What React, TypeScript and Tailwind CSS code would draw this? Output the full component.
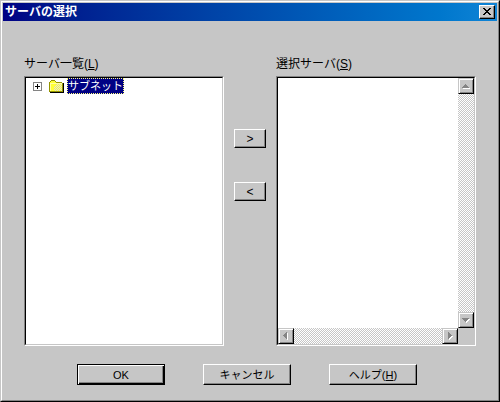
import React from 'react'

type Direction = 'up' | 'down' | 'left' | 'right'

const RAISED =
  'border border-t-white border-l-white border-r-black border-b-black bg-[#c6c6c6] shadow-[inset_-1px_-1px_0_#848484]'
const SUNKEN =
  'border border-t-[#848484] border-l-[#848484] border-r-white border-b-white bg-white'
const SUNKEN_INNER =
  'h-full border border-t-black border-l-black border-r-[#c6c6c6] border-b-[#c6c6c6]'
const TRACK =
  'bg-[repeating-conic-gradient(#c6c6c6_0%_25%,#ffffff_0%_50%)] bg-[length:2px_2px]'

const ARROWS: Record<Direction, string> = {
  up: 'M7 6h1v1h1v1h1v1h1v1H4V9h1V8h1V7h1z',
  down: 'M4 6h7v1h-1v1H9v1H8v1H7V9H6V8H5V7H4z',
  left: 'M8 4h1v7H8v-1H7V9H6V8H5V7h1V6h1V5h1z',
  right: 'M6 4h1v1h1v1h1v1h1v1H9v1H8v1H7v1H6z',
}

const SCROLL_LABELS: Record<Direction, string> = {
  up: '上へ',
  down: '下へ',
  left: '左へ',
  right: '右へ',
}

function ScrollButton({ direction }: { direction: Direction }) {
  return (
    <button
      type="button"
      disabled
      aria-label={SCROLL_LABELS[direction]}
      className="size-4 shrink-0 border border-t-[#c6c6c6] border-l-[#c6c6c6] border-r-black border-b-black bg-[#c6c6c6] shadow-[inset_1px_1px_0_#fff,inset_-1px_-1px_0_#848484]"
    >
      <svg viewBox="1 1 14 14" className="block size-full" shapeRendering="crispEdges">
        <path d={ARROWS[direction]} fill="#fff" transform="translate(1 1)" />
        <path d={ARROWS[direction]} fill="#848484" />
      </svg>
    </button>
  )
}

function FolderIcon() {
  return (
    <svg viewBox="0 0 15 13" className="h-[13px] w-[15px]" shapeRendering="crispEdges">
      <path d="M14 3h1v10H1v-1h13z" fill="#000" />
      <path d="M2 0h4v1h1v1h6v1h1v9H0V2h1V1h1z" fill="#949400" />
      <path d="M2 1h4v1h1v1h6v8H1V2h1z" fill="#ffff39" />
      <path d="M1 3h1v8H1zM2 3h11v1H2z" fill="#ffffa5" />
      {/* dithered highlight on the lower right */}
      <path
        d="M8 4h1v1H8zM10 4h1v1h-1zM12 4h1v1h-1zM7 5h1v1H7zM9 5h1v1H9zM11 5h1v1h-1zM6 6h1v1H6zM8 6h1v1H8zM10 6h1v1h-1zM12 6h1v1h-1zM5 7h1v1H5zM7 7h1v1H7zM9 7h1v1H9zM11 7h1v1h-1zM6 8h1v1H6zM8 8h1v1H8zM10 8h1v1h-1zM12 8h1v1h-1zM5 9h1v1H5zM7 9h1v1H7zM9 9h1v1H9zM11 9h1v1h-1zM6 10h1v1H6zM8 10h1v1H8zM10 10h1v1h-1zM12 10h1v1h-1z"
        fill="#dedede"
      />
    </svg>
  )
}

function DialogButton({ children }: { children: React.ReactNode }) {
  return (
    <button type="button" className={`h-[21px] w-[88px] text-[11px] leading-[18px] ${RAISED}`}>
      {children}
    </button>
  )
}

function MoveButton({ label, children }: { label: string; children: React.ReactNode }) {
  return (
    <button type="button" aria-label={label} className={`h-[19px] w-8 leading-4 ${RAISED}`}>
      {children}
    </button>
  )
}

export default function App() {
  return (
    <div
      role="dialog"
      aria-labelledby="title"
      className="border border-t-[#c6c6c6] border-l-[#c6c6c6] border-r-black border-b-black bg-[#c6c6c6] font-['Liberation_Sans','Noto_Sans_CJK_JP',sans-serif] text-xs text-black"
    >
      <div className="border border-t-white border-l-white border-r-[#848484] border-b-[#848484] p-px pb-[15px]">
        <header className="flex h-[18px] items-center justify-between bg-linear-to-r from-[#000084] to-[#1084d6] px-0.5">
          <h1 id="title" className="text-xs leading-[18px] font-bold text-white">
            サーバの選択
          </h1>
          <button type="button" aria-label="閉じる" className={`h-[14px] w-4 ${RAISED}`}>
            <svg viewBox="0 0 14 12" className="block size-full" shapeRendering="crispEdges">
              <path
                d="M3 2h2v1h1v1h2V3h1V2h2v1h-1v1H9v1H8v1h1v1h1v1h1v1H9V8H8V7H6v1H5v1H3V8h1V7h1V6h1V5H5V4H4V3H3z"
                fill="#000"
              />
            </svg>
          </button>
        </header>

        <main className="flex px-[21px] pt-[35px]">
          <section className="min-w-0 flex-1">
            <h2 id="servers" className="h-5 leading-4">
              サーバ一覧(<u>L</u>)
            </h2>
            <div className={`h-[270px] ${SUNKEN}`}>
              <ul role="tree" aria-labelledby="servers" className={SUNKEN_INNER}>
                <li role="treeitem" aria-selected="true" className="flex h-4 items-center pl-[7px]">
                  <button type="button" aria-label="展開" className="size-[9px]">
                    <svg viewBox="0 0 9 9" className="block size-full" shapeRendering="crispEdges">
                      <path d="M0 0h9v9H0zM1 1v7h7V1z" fill="#848484" fillRule="evenodd" />
                      <path d="M2 4h5v1H2zM4 2h1v5H4z" fill="#000" />
                    </svg>
                  </button>
                  <span className="ml-[7px]">
                    <FolderIcon />
                  </span>
                  <span className="ml-[3px] h-4 border border-dotted border-[#ffff7b] bg-[#000084] text-[11px] leading-[14px] text-white">
                    サブネット
                  </span>
                </li>
              </ul>
            </div>
          </section>

          <div className="flex w-[52px] flex-col items-center gap-[34px] pt-[73px]">
            <MoveButton label="追加">&gt;</MoveButton>
            <MoveButton label="削除">&lt;</MoveButton>
          </div>

          <section className="min-w-0 flex-1">
            <h2 id="selected" className="h-5 leading-4">
              選択サーバ(<u>S</u>)
            </h2>
            <div className={`h-[270px] ${SUNKEN}`}>
              <div className={`flex flex-col ${SUNKEN_INNER}`}>
                <div className="flex flex-1">
                  <ul role="listbox" aria-labelledby="selected" className="flex-1" />
                  <div className={`flex w-4 flex-col justify-between ${TRACK}`}>
                    <ScrollButton direction="up" />
                    <ScrollButton direction="down" />
                  </div>
                </div>
                <div className="flex h-4 bg-[#c6c6c6]">
                  <div className={`flex flex-1 justify-between ${TRACK}`}>
                    <ScrollButton direction="left" />
                    <ScrollButton direction="right" />
                  </div>
                  <div className="w-4" />
                </div>
              </div>
            </div>
          </section>
        </main>

        <footer className="mt-[18px] flex justify-center gap-[38px] pr-1.5">
          <button
            type="button"
            className="h-[21px] w-[88px] border border-black bg-[#c6c6c6] text-[11px] leading-[18px] shadow-[inset_1px_1px_0_#fff,inset_-1px_-1px_0_#000,inset_-2px_-2px_0_#848484]"
          >
            OK
          </button>
          <DialogButton>キャンセル</DialogButton>
          <DialogButton>
            ヘルプ(<u>H</u>)
          </DialogButton>
        </footer>
      </div>
    </div>
  )
}
